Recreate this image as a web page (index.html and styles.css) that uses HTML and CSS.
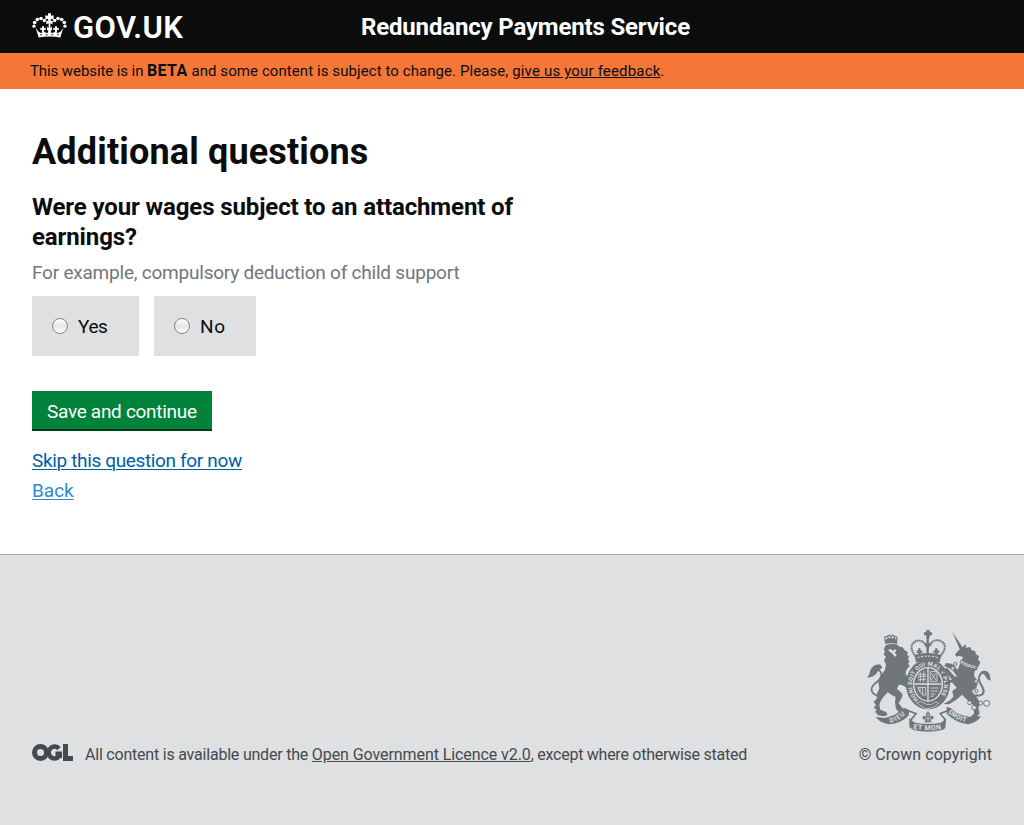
FILE: index.html
```html
<!DOCTYPE html>
<html lang="en">
<head>
<meta charset="utf-8">
<title>Additional questions</title>
<link rel="stylesheet" href="styles.css">
</head>
<body>
<header class="header">
  <a class="logo">
    <svg class="crown" viewBox="0 0 105 80" width="35" height="27" fill="#fff">
      <path d="M11 47L20 76Q52 70 85 76L94 47L86 58L80 62H74L70 58L64 62H57L55 44H50L48 62H41L35 58L31 62H25L19 58Z"/>
      <path d="M48 3H57V11L65 9V23L57 20L56 27L62 25V36L55 33V46H50V33L43 36V25L49 27L48 20L40 23V9L48 11Z"/>
      <path d="M45 44L52 50L60 44V54L52 55L45 54Z"/>
      <g><circle cx="6" cy="42" r="5"/><circle cx="8" cy="31" r="5.500"/><circle cx="16" cy="22" r="5.500"/><circle cx="27" cy="19" r="5.500"/><circle cx="37" cy="25" r="5"/><circle cx="68" cy="25" r="5"/><circle cx="78" cy="19" r="5.500"/><circle cx="89" cy="22" r="5.500"/><circle cx="97" cy="31" r="5.500"/><circle cx="99" cy="42" r="5"/></g>
      <path d="M30 42H36V48L41 46V54L36 53V61H30V53L25 54V46L30 48ZM69 42H75V48L80 46V54L75 53V61H69V53L64 54V46L69 48Z"/>
      <path d="M24 68L81 68" stroke="#0b0c0c" stroke-width="2.500" stroke-dasharray="6 11"/>
    </svg>
    <span class="wordmark">GOV.UK</span>
  </a>
  <span class="service">Redundancy Payments Service</span>
</header>
<div class="beta"><span class="beta-text"><span class="lead">This website is in </span><b>BETA</b> and some content is subject to change. Please, <a>give us your feedback</a>.</span></div>
<main class="main">
  <h1><span>Additional questions</span></h1>
  <h2><span>Were your wages subject to an attachment of</span><br><span>earnings?</span></h2>
  <p class="hint"><span>For example, compulsory deduction of child support</span></p>
  <div class="options">
    <label class="option yes"><i class="radio"></i><span>Yes</span></label>
    <label class="option no"><i class="radio"></i><span>No</span></label>
  </div>
  <button class="save"><span>Save and continue</span></button>
  <p class="link"><a class="skip">Skip this question for now</a></p>
  <p class="link"><a class="back">Back</a></p>
</main>
<footer class="footer">
  <div class="licence">
    <svg class="ogl" viewBox="0 0 41 17" width="41" height="17" fill="none" stroke="#454a4c" stroke-width="5">
      <circle cx="8.500" cy="8.500" r="6"/>
      <path d="M27 4.600A5.900 5.900 0 1 0 26.500 13M23.500 9.800H27.700V14" stroke-width="4.600"/>
      <path d="M33.500 0V14.500H41"/>
    </svg>
    <span class="licence-text">All content is available under the <a>Open Government Licence v2.0</a><span class="tail">, except where otherwise stated</span></span>
  </div>
  <div class="copyright">
    <svg class="arms" viewBox="21 24 375 306" width="125" height="102" fill="#6f777b">
      <defs>
        <path id="garter" d="M176 233A48 56 0 1 1 232 233"/>
        <path id="dieu" d="M91 302Q118 298 142 272"/>
        <path id="etmon" d="M160 321Q204 328 250 321"/>
        <path id="droit" d="M264 273Q290 296 324 301"/>
      </defs>
      <path d="M76 66L73 53L80 52L85 45L90 51L91 41L96 50L103 46L106 52L112 52L111 66Q92 61 76 66Z"/>
      <path d="M75 52Q72 42 82 44Q88 35 92 44Q101 36 103 45Q112 41 111 52" fill="none" stroke="#6f777b" stroke-width="4"/>
      <path d="M78 69Q95 64 112 68L118 74L128 76L134 85L144 91L141 98L148 106L143 110L149 120L144 124L149 133Q134 144 138 160Q154 164 155 173L146 180L156 182L154 192L144 190L153 200L145 205Q135 188 116 188L111 202Q127 211 128 222L116 244L128 259L139 261L139 268L119 273L108 261L105 240L107 225Q93 219 83 211L67 229L58 247L61 263L78 270L83 279L72 283L54 280L46 270L49 262L41 257L48 249L41 240L51 229L50 218L58 199L55 181L63 161L75 143L78 127L72 115L78 104L71 98L75 88L71 81Z"/>
      <path d="M54 222C28 213 31 195 47 183C65 170 69 154 58 146C50 140 41 144 38 151" fill="none" stroke="#6f777b" stroke-width="5"/>
      <path d="M62 128Q39 125 31 145Q29 157 22 167Q45 166 54 147L67 137Z"/>
      <path d="M84 84L92 81L98 86L106 82L110 86L104 91L110 99L104 105L99 97L91 90Z" fill="#dee0e2"/>
      <path d="M199 24H209V31H216V40H209V49H199V40H192V31H199Z"/>
      <g fill="none" stroke="#6f777b"><path d="M168 105Q147 78 159 64Q175 47 195 65L203 78L212 64Q230 46 249 62Q264 77 239 105" stroke-width="6" stroke-dasharray="5 1.500"/><path d="M203 46V98M194 68H214" stroke-width="7"/><path d="M178 79V101M170 89H187M229 79V101M220 89H238" stroke-width="7"/></g>
      <path d="M163 98Q203 88 244 98L239 121Q204 111 168 121Z"/>
      <path d="M172 107Q203 98 235 107" stroke="#dee0e2" stroke-width="3" stroke-dasharray="7 4" fill="none"/>
      <ellipse cx="204" cy="187" rx="66" ry="75"/>
      <ellipse cx="204" cy="187" rx="45" ry="52" fill="#dee0e2"/>
      <ellipse cx="204" cy="187" rx="41" ry="48"/>
      <g stroke="#dee0e2" stroke-width="2.500" fill="none"><path d="M204 139V235M164 186H244" stroke-width="4"/><path d="M173 157H198M173 165L199 162M174 174L198 171M181 151V179M191 147V180M211 149H231V178H211ZM215 154L227 174M227 154L214 174M173 196H197V220Q181 219 173 196M180 196V211M188 196V220M211 198H235M212 207H233M211 216H226M212 224L222 221"/></g>
      <g class="motto"><text font-size="17"><textPath href="#garter" textLength="248">HONI SOIT QUI MAL Y PENSE</textPath></text></g>
      <path d="M170 243L183 239L199 247L214 248L224 240L237 243L226 253L211 259H194Z" stroke="#dee0e2" stroke-width="2"/>
      <path d="M277 29L309 78L300 84Z"/>
      <path d="M306 77L317 66L318 77L330 75L335 85L345 87L348 97L357 102L354 113L361 121L350 145L340 147L298 121L310 106L298 101L290 104L285 97L298 83Z"/>
      <path d="M301 122Q320 139 345 141L342 161L354 180L349 198L335 207L350 225L361 243L355 258L359 274L343 295L333 294L334 282L342 275L341 250L325 237L306 218L288 234L267 247L251 246L270 235L280 224L277 207L290 197L276 181L260 190L254 182L267 174L276 173L258 151L250 152L248 140L262 138L282 162L292 165L277 143L253 132L258 123L276 125L293 143Z"/>
      <path d="M300 117Q323 133 349 136" fill="none" stroke="#dee0e2" stroke-width="7"/>
      <path d="M300 117Q323 133 349 136" fill="none" stroke="#6f777b" stroke-width="4" stroke-dasharray="5 3"/>
      <path d="M346 219C367 226 375 212 369 199C363 185 350 174 360 158C370 141 389 152 388 174" fill="none" stroke="#6f777b" stroke-width="6"/>
      <path d="M360 157Q374 137 388 155L387 168L395 176L382 172L372 156Z"/>
      <g fill="#dee0e2" stroke="#6f777b" stroke-width="3"><circle cx="286" cy="126" r="5"/><circle cx="278" cy="139" r="5"/><circle cx="348" cy="178" r="5"/><circle cx="349" cy="207" r="5"/><circle cx="329" cy="242" r="6"/><circle cx="342" cy="257" r="7"/><circle cx="362" cy="243" r="6"/><circle cx="380" cy="244" r="9"/></g>
      <path d="M47 285L75 288L103 279L134 258L149 265L145 282Q123 304 87 307Q60 303 47 285Z"/>
      <path d="M145 266L168 275L155 291L151 304M262 266L241 275L254 291L256 304" fill="none" stroke="#6f777b" stroke-width="5"/>
      <path d="M148 287Q157 300 166 302Q204 309 242 302Q250 299 258 287L256 318L247 324Q204 335 160 324L148 315Z"/>
      <path d="M260 255L272 258Q295 282 328 284L363 283Q352 302 325 307Q291 304 260 275Z"/>
      <path d="M204 267L211 277L208 286Q215 277 221 284Q222 293 211 293L215 301H193L197 293Q185 293 188 284Q194 277 200 286L197 277Z"/>
      <path d="M204 273V298M194 290H214" stroke="#dee0e2" stroke-width="2"/>
      <g class="motto"><text font-size="20"><textPath href="#dieu" textLength="52">DIEU</textPath></text><text font-size="21"><textPath href="#etmon" textLength="84">ET MON</textPath></text><text font-size="20"><textPath href="#droit" textLength="60">DROIT</textPath></text></g>
    </svg>
    <span class="copy-text">© Crown copyright</span>
  </div>
</footer>
</body>
</html>
```
FILE: styles.css
```css
* { box-sizing: border-box; }
body { margin: 0; font-family: Roboto, "Noto Sans", sans-serif; color: #0b0c0c; background: #fff; }
h1, h2, p { margin: 0; }
.header { display: flex; height: 53px; padding-left: 32px; background: #0b0c0c; color: #fff; }
.logo { display: flex; width: 329px; padding-top: 12px; gap: 6px; }
.wordmark { font-size: 31px; line-height: 32px; font-weight: 600; white-space: nowrap; letter-spacing: 0.4px; }
.service { font-size: 24px; line-height: 54px; font-weight: 700; white-space: nowrap; letter-spacing: -0.17px; }
.beta { height: 36px; padding-left: 30px; background: #f47738; font-size: 15px; line-height: 36px; white-space: nowrap; letter-spacing: 0.08px; }
.lead { letter-spacing: -0.09px; }
.beta b { font-size: 16px; letter-spacing: 0.35px; }
.beta a { letter-spacing: 0.17px; }
.beta a, .licence a { text-decoration: underline; }
.main { height: 465px; padding: 38px 32px 0; white-space: nowrap; }
h1 { font-size: 36px; line-height: 50px; font-weight: 700; letter-spacing: 0.16px; }
h2 { margin-top: 15px; font-size: 24px; line-height: 30px; font-weight: 700; letter-spacing: -0.12px; }
.hint { margin-top: 6px; font-size: 19px; line-height: 30px; color: #6f777b; letter-spacing: -0.22px; }
.options { display: flex; gap: 15px; margin-top: 8px; }
.option { display: flex; align-items: center; gap: 10px; height: 60px; padding-left: 20px; background: #dee0e2; font-size: 19px; }
.yes { width: 107px; letter-spacing: -0.4px; }
.no { width: 102px; letter-spacing: 0.6px; }
.radio { width: 16px; height: 16px; border: 1px solid #858585; border-radius: 50%; background: linear-gradient(#fff, #e6e6e6 50%, #fff); }
.save { display: block; width: 180px; height: 40px; margin-top: 35px; padding: 3px 0 0 15px; border: 0; border-bottom: 2px solid #003618; background: #00823b; color: #fff; font: 19px/35px Roboto, sans-serif; letter-spacing: -0.3px; text-align: left; }
.link { font-size: 19px; line-height: 30px; }
.save + .link { margin-top: 15px; }
.link a { text-decoration: underline; text-decoration-thickness: 1px; text-underline-offset: 2px; }
.skip { color: #005ea5; letter-spacing: -0.35px; }
.back { color: #2e8aca; }
.footer { display: flex; justify-content: space-between; height: 271px; padding: 75px 32px 0; border-top: 1px solid #a1acb2; background: #dee0e2; color: #454a4c; font-size: 16px; white-space: nowrap; }
.licence { display: flex; gap: 12px; margin-top: 114px; height: 20px; letter-spacing: -0.21px; }
.licence a { letter-spacing: -0.08px; }
.tail { letter-spacing: -0.26px; }
.licence-text, .copy-text { line-height: 22px; }
.copyright { display: flex; flex-direction: column; align-items: flex-end; }
.copy-text { margin-top: 12px; letter-spacing: 0.05px; }
.arms { flex: none; }
.motto { fill: #dee0e2; font-family: Roboto, sans-serif; font-weight: 700; }
```
